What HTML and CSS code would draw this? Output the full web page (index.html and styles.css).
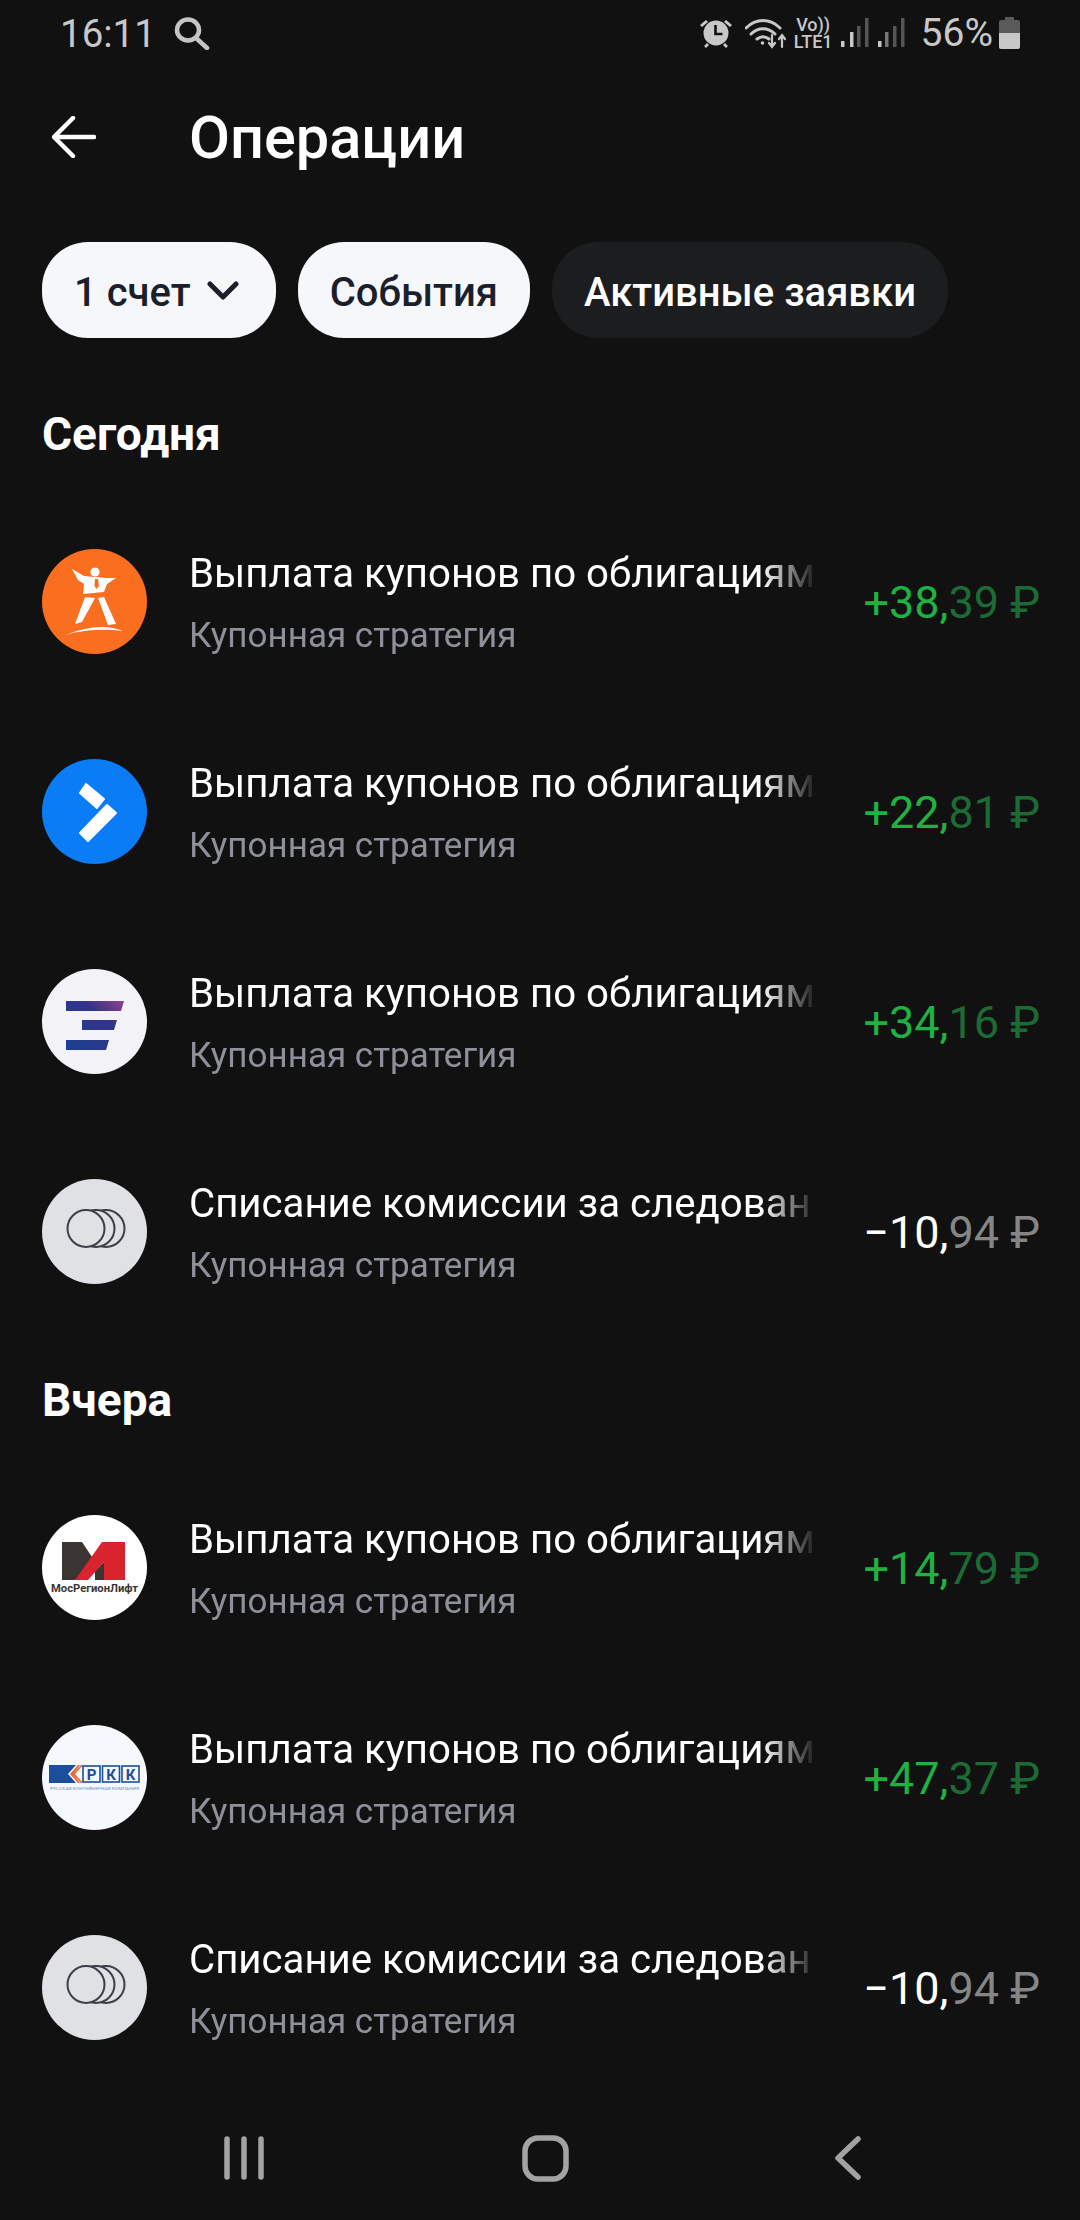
FILE: index.html
```html
<!DOCTYPE html>
<html lang="ru">
<head>
  <meta charset="UTF-8">
  <title>Операции</title>
  <link rel="stylesheet" href="styles.css">
</head>
<body>
<div class="screen">
  <div class="status">
    <span class="status-time">16:11</span>
    <svg class="status-search" viewBox="0 0 36 33" fill="none" stroke="#c4c4c4" stroke-width="4.5" stroke-linecap="round"><ellipse cx="14" cy="13" rx="11" ry="10.5"/><path d="M22 21l11 10"/></svg>
    <span class="status-right">
      <svg class="status-alarm" viewBox="0 0 34 32"><path d="M1 8l6-5 2 2-6 5zM33 8l-6-5-2 2 6 5z" fill="#c8c8c8"/><circle cx="17" cy="16" r="12.5" fill="#c8c8c8"/><path d="M16.5 8v9h7" fill="none" stroke="#111112" stroke-width="2.6"/><path d="M5 29l3-3 2 2-3 3zM29 29l-3-3-2 2 3 3z" fill="#c8c8c8"/></svg>
      <svg class="status-wifi" viewBox="0 0 42 32" fill="none" stroke="#c8c8c8" stroke-width="3" stroke-linecap="round"><path d="M1 11c10-10 24-10 34 0"/><path d="M6 17c7-7 17-7 24 0"/><path d="M12 22c4-3 8-3 12 0"/><circle cx="17.5" cy="26" r="1.8" fill="#c8c8c8" stroke="none"/><path d="M27 18v11M24 26l3 4 3-4M37 30V19M34 22l3-4 3 4" stroke-width="2.2"/></svg>
      <span class="status-volte"><span>Vo))</span><span>LTE1</span></span>
      <svg class="status-signal" viewBox="0 0 30 32"><rect x="1" y="24" width="3.5" height="6" fill="#c8c8c8"/><rect x="10" y="15" width="3.5" height="15" fill="#c8c8c8"/><rect x="17" y="9" width="3.5" height="21" fill="#555"/><rect x="25" y="1" width="3.5" height="29" fill="#555"/></svg>
      <svg class="status-signal" viewBox="0 0 30 32"><rect x="1" y="24" width="3.5" height="6" fill="#c8c8c8"/><rect x="8" y="15" width="3.5" height="15" fill="#777"/><rect x="16" y="9" width="3.5" height="21" fill="#555"/><rect x="24" y="1" width="3.5" height="29" fill="#555"/></svg>
      <span class="status-battery-text">56%</span>
      <svg class="status-battery" viewBox="0 0 21 32"><path d="M6 0h9v3h4q2 0 2 2v11H0V5q0-2 2-2h4z" fill="#5a5a5a"/><path d="M0 16h21v14q0 2-2 2H2q-2 0-2-2z" fill="#c8c8c8"/></svg>
    </span>
  </div>

  <header class="topbar">
    <svg class="back" viewBox="0 0 44 42" fill="none" stroke="#fff" stroke-width="4.5" stroke-linecap="round" stroke-linejoin="round"><path d="M42 21H3M21 2L2 21l19 19"/></svg>
    <h1>Операции</h1>
  </header>

  <div class="filters">
    <button class="pill pill-light pill-account">1 счет
      <svg class="chevron" viewBox="0 0 32 19" fill="none" stroke="#1a1f2b" stroke-width="5" stroke-linecap="round" stroke-linejoin="round"><path d="M3 3l13 13L29 3"/></svg>
    </button>
    <button class="pill pill-light">События</button>
    <button class="pill pill-dark">Активные заявки</button>
  </div>

  <main class="feed">
    <h2>Сегодня</h2>

    <div class="op">
      <svg class="op-logo" viewBox="0 0 105 105">
        <circle cx="52.5" cy="52.5" r="52.5" fill="#f96f1f"/>
        <circle cx="53" cy="23" r="4.600" fill="#fff"/>
        <path d="M30 20l12 7 10 1 2 0 10 1 10 0-9 6-3 8-21 2 1-10-6-4z" fill="#fff"/>
        <path d="M53 30l3 0 1 7-2.500 3-2-3z" fill="#f96f1f"/>
        <path d="M43 48l10 1-13 24-7 2zM56 49l6-1 12 27-8 1z" fill="#fff"/>
        <path d="M24 86c20-8 40-11 57-4-18-2-38-2-57 4z" fill="#fff"/>
      </svg>
      <div class="op-text">
        <div class="op-title">Выплата купонов по облигациям</div>
        <div class="op-sub">Купонная стратегия</div>
      </div>
      <div class="amount plus">+38,<span class="amount-dim">39&nbsp;₽</span></div>
    </div>

    <div class="op">
      <svg class="op-logo" viewBox="0 0 105 105">
        <circle cx="52.5" cy="52.5" r="52.5" fill="#0a7cf5"/>
        <path d="M44 25l18 15-7 9-17-15zM65 46l9 8-28 28-8-8z" fill="#fff" stroke="#fff" stroke-width="2" stroke-linejoin="round"/>
      </svg>
      <div class="op-text">
        <div class="op-title">Выплата купонов по облигациям</div>
        <div class="op-sub">Купонная стратегия</div>
      </div>
      <div class="amount plus">+22,<span class="amount-dim">81&nbsp;₽</span></div>
    </div>

    <div class="op">
      <svg class="op-logo" viewBox="0 0 105 105">
        <defs>
          <linearGradient id="bars" x1="0" y1="1" x2="1" y2="0">
            <stop offset="0" stop-color="#1c3f8f"/>
            <stop offset="0.65" stop-color="#33348a"/>
            <stop offset="1" stop-color="#93408f"/>
          </linearGradient>
        </defs>
        <circle cx="52.5" cy="52.5" r="52.5" fill="#f3f3f7"/>
        <path d="M24 32h58l-3 10H24zM40 51h35l-3 10H40zM24 71h43l-3 10H24z" fill="url(#bars)"/>
      </svg>
      <div class="op-text">
        <div class="op-title">Выплата купонов по облигациям</div>
        <div class="op-sub">Купонная стратегия</div>
      </div>
      <div class="amount plus">+34,<span class="amount-dim">16&nbsp;₽</span></div>
    </div>

    <div class="op">
      <svg class="op-logo" viewBox="0 0 105 105">
        <circle cx="52.5" cy="52.5" r="52.5" fill="#dfe1e4"/>
        <g fill="#dfe1e4" stroke="#3c3f47" stroke-width="2">
          <circle cx="64" cy="49.500" r="18.500"/>
          <circle cx="54" cy="49.500" r="18.500"/>
          <circle cx="44" cy="49.500" r="18.500"/>
        </g>
      </svg>
      <div class="op-text">
        <div class="op-title">Списание комиссии за следование</div>
        <div class="op-sub">Купонная стратегия</div>
      </div>
      <div class="amount minus">−10,<span class="amount-dim">94&nbsp;₽</span></div>
    </div>

    <h2>Вчера</h2>

    <div class="op">
      <svg class="op-logo" viewBox="0 0 105 105">
        <circle cx="52.5" cy="52.5" r="52.5" fill="#fff"/>
        <path d="M20 27h20l14 21-21 17H20zM53 56l9-9v18h-9z" fill="#3a3533"/>
        <path d="M33 65l27-38h23v38H62V47L46 65z" fill="#d9232e"/>
        <text class="logo-text" x="9" y="77" font-size="11" textLength="87" lengthAdjust="spacingAndGlyphs" fill="#3a3533">МосРегионЛифт</text>
      </svg>
      <div class="op-text">
        <div class="op-title">Выплата купонов по облигациям</div>
        <div class="op-sub">Купонная стратегия</div>
      </div>
      <div class="amount plus">+14,<span class="amount-dim">79&nbsp;₽</span></div>
    </div>

    <div class="op">
      <svg class="op-logo" viewBox="0 0 105 105">
        <circle cx="52.5" cy="52.5" r="52.5" fill="#f5f8fc"/>
        <path d="M7 40h27l-8 9 8 9H7z" fill="#1b4f9c"/>
        <path d="M28 49l8-9h3l-8 9 8 9h-3zM33 49l8-9h-3l-7 9 7 9h3z" fill="#e8682c"/>
        <g fill="none" stroke="#1b4f9c" stroke-width="1.600">
          <rect x="41" y="41" width="17" height="16"/>
          <rect x="60.500" y="41" width="17" height="16"/>
          <rect x="80" y="41" width="17" height="16"/>
        </g>
        <text class="logo-text" x="49.500" y="54.500" font-size="15" text-anchor="middle" fill="#1b4f9c">Р</text>
        <text class="logo-text" x="69" y="54.500" font-size="15" text-anchor="middle" fill="#1b4f9c">К</text>
        <text class="logo-text" x="88.500" y="54.500" font-size="15" text-anchor="middle" fill="#1b4f9c">К</text>
        <text class="logo-text-thin" x="8" y="65" font-size="4" textLength="89" lengthAdjust="spacingAndGlyphs" fill="#6f8fbc">РУССКАЯ КОНТЕЙНЕРНАЯ КОМПАНИЯ</text>
      </svg>
      <div class="op-text">
        <div class="op-title">Выплата купонов по облигациям</div>
        <div class="op-sub">Купонная стратегия</div>
      </div>
      <div class="amount plus">+47,<span class="amount-dim">37&nbsp;₽</span></div>
    </div>

    <div class="op">
      <svg class="op-logo" viewBox="0 0 105 105">
        <circle cx="52.5" cy="52.5" r="52.5" fill="#dfe1e4"/>
        <g fill="#dfe1e4" stroke="#3c3f47" stroke-width="2">
          <circle cx="64" cy="49.500" r="18.500"/>
          <circle cx="54" cy="49.500" r="18.500"/>
          <circle cx="44" cy="49.500" r="18.500"/>
        </g>
      </svg>
      <div class="op-text">
        <div class="op-title">Списание комиссии за следование</div>
        <div class="op-sub">Купонная стратегия</div>
      </div>
      <div class="amount minus">−10,<span class="amount-dim">94&nbsp;₽</span></div>
    </div>
  </main>

  <nav class="navbar">
    <span class="nav-cell">
      <svg class="nav-recent" viewBox="0 0 40 44" stroke="#a3a3a3" stroke-width="5.500" stroke-linecap="round"><path d="M3 3v38M20 3v38M37 3v38"/></svg>
    </span>
    <span class="nav-cell">
      <svg class="nav-home" viewBox="0 0 47 47" fill="none" stroke="#a3a3a3" stroke-width="5.500"><rect x="3" y="3" width="41" height="41" rx="13"/></svg>
    </span>
    <span class="nav-cell">
      <svg class="nav-back" viewBox="0 0 26 44" fill="none" stroke="#a3a3a3" stroke-width="5.500" stroke-linecap="round" stroke-linejoin="round"><path d="M23 3L3 22l20 19"/></svg>
    </span>
  </nav>
</div>
</body>
</html>
```

FILE: styles.css
```css
html,
body {
    margin: 0;
    height: 100%;
}

body {
    background: #111112;
    font-family: Roboto, 'Noto Sans', sans-serif;
    color: #fff;
}

.screen {
    display: flex;
    flex-direction: column;
    height: 2220px;
    overflow: hidden;
}

/* status bar */
.status {
    display: flex;
    align-items: center;
    height: 66px;
    padding: 0 60px;
    color: #c8c8c8;
    flex-shrink: 0;
}

.status-time {
    font-size: 38.5px;
}

.status-search {
    width: 36px;
    height: 33px;
    margin-left: 18px;
}

.status-right {
    display: flex;
    align-items: center;
    margin-left: auto;
}

.status-alarm {
    width: 34px;
    height: 32px;
}

.status-wifi {
    width: 42px;
    height: 32px;
    margin-left: 12px;
}

.status-volte {
    display: flex;
    flex-direction: column;
    align-items: center;
    margin-left: 7px;
    font-size: 18px;
    line-height: 17px;
    font-weight: 500;
}

.status-signal {
    width: 30px;
    height: 32px;
    margin-left: 7px;
}

.status-battery-text {
    margin-left: 14px;
    font-size: 39px;
}

.status-battery {
    width: 21px;
    height: 32px;
    margin-left: 6px;
}

/* top bar */
.topbar {
    display: flex;
    align-items: center;
    height: 142px;
    padding-left: 52px;
    flex-shrink: 0;
}

.back {
    width: 44px;
    height: 42px;
}

.topbar h1 {
    margin: 2px 0 0 93px;
    font-size: 59.5px;
    font-weight: 500;
}

/* filters */
.filters {
    display: flex;
    gap: 22px;
    margin-top: 34px;
    padding-left: 42px;
    flex-shrink: 0;
}

.pill {
    display: flex;
    align-items: center;
    height: 96px;
    padding: 4px 32px 0;
    border: 0;
    border-radius: 46px;
    font-family: inherit;
    font-size: 40px;
    font-weight: 500;
}

.pill-account {
    padding-right: 37px;
}

.pill-light {
    background: #f5f7fa;
    color: #1a1f2b;
}

.pill-dark {
    background: #1c1d1f;
    color: #fff;
}

.chevron {
    width: 32px;
    height: 19px;
    margin: 0 0 4px 16px;
}

/* operations */
.feed {
    flex: 1;
    overflow: hidden;
}

.feed h2 {
    margin: 32px 0 29px 42px;
    font-size: 46px;
    line-height: 65px;
    font-weight: 700;
}

.feed h2:first-child {
    margin-top: 64px;
}

.op {
    display: flex;
    align-items: center;
    height: 210px;
    padding: 0 40px 0 42px;
}

.op-logo {
    width: 105px;
    height: 105px;
    flex-shrink: 0;
}

.op-text {
    width: 623px;
    margin: 3px 0 0 42px;
    overflow: hidden;
    white-space: nowrap;
    -webkit-mask-image: linear-gradient(to right, #000 92%, rgba(0, 0, 0, 0.1) 100%);
    mask-image: linear-gradient(to right, #000 92%, rgba(0, 0, 0, 0.1) 100%);
}

.op-title {
    font-size: 40.2px;
    line-height: 50px;
}

.op-sub {
    margin-top: 16px;
    font-size: 35px;
    line-height: 42px;
    color: #8e9199;
}

.amount {
    margin: 2px 0 0 auto;
    font-size: 45px;
    white-space: nowrap;
}

.plus {
    color: #1fb141;
}

.plus .amount-dim {
    color: #1c6b35;
}

.minus {
    color: #fff;
}

.minus .amount-dim {
    color: #868686;
}

.logo-text {
    font-weight: 700;
}

.logo-text-thin {
    font-weight: 400;
}

/* navigation bar */
.navbar {
    display: flex;
    align-items: center;
    justify-content: center;
    height: 124px;
    padding: 0 0 0 11px;
    background: #111112;
    flex-shrink: 0;
}

.nav-cell {
    display: flex;
    justify-content: center;
    width: 302px;
}

.nav-recent {
    width: 40px;
    height: 44px;
}

.nav-home {
    width: 47px;
    height: 47px;
}

.nav-back {
    width: 26px;
    height: 44px;
}
```
